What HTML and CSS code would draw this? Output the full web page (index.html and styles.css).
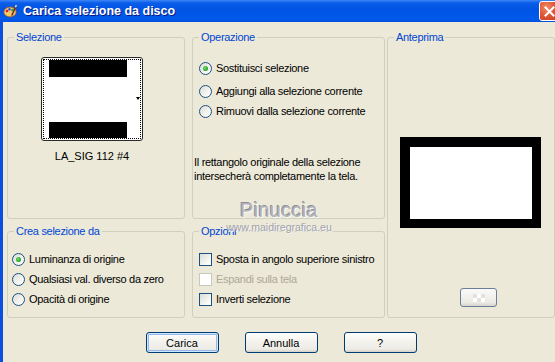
FILE: index.html
```html
<!DOCTYPE html>
<html lang="it">
<head>
    <meta charset="UTF-8">
    <title>Carica selezione da disco</title>
    <link rel="stylesheet" href="styles.css">
</head>
<body>
    <div class="window">
        <div class="titlebar">
            <svg class="app-icon" viewBox="0 0 14 14">
                <ellipse cx="7" cy="8" rx="6.2" ry="5" fill="#f2c27c" stroke="#8a5426" stroke-width="0.8"/>
                <circle cx="4" cy="7" r="1.3" fill="#d82020"/>
                <circle cx="6.5" cy="5.2" r="1.2" fill="#2050e0"/>
                <circle cx="9.5" cy="6" r="1.2" fill="#20a040"/>
                <circle cx="5" cy="10.2" r="1.2" fill="#f0e020"/>
                <path d="M9 11 L13 2" stroke="#6a3a12" stroke-width="1.6" stroke-linecap="round"/>
                <path d="M12.4 3.2 L13.4 1" stroke="#e8e8e8" stroke-width="1.4"/>
            </svg>
            <span class="title">Carica selezione da disco</span>
            <div class="close-btn">
                <svg viewBox="0 0 11 11" width="11" height="11">
                    <path d="M1.5 1.5 L9.5 9.5 M9.5 1.5 L1.5 9.5" stroke="#fff" stroke-width="2" stroke-linecap="square"/>
                </svg>
            </div>
        </div>

        <div class="client">
            <div class="groups">
                <fieldset class="group sel-group">
                    <legend>Selezione</legend>
                    <div class="thumb-wrap">
                        <div class="thumb">
                            <div class="thumb-focus">
                                <div class="thumb-pic">
                                    <div class="bar top-bar"></div>
                                    <div class="bar bottom-bar"></div>
                                </div>
                                <div class="thumb-arrow"></div>
                            </div>
                        </div>
                        <div class="thumb-name">LA_SIG 112 #4</div>
                    </div>
                </fieldset>

                <fieldset class="group op-group">
                    <legend>Operazione</legend>
                    <div class="row first-row"><span class="radio checked"></span>Sostituisci selezione</div>
                    <div class="row second-row"><span class="radio"></span>Aggiungi alla selezione corrente</div>
                    <div class="row"><span class="radio"></span>Rimuovi dalla selezione corrente</div>
                    <p class="note">Il rettangolo originale della selezione<br>intersecherà completamente la tela.</p>
                </fieldset>

                <fieldset class="group preview-group">
                    <legend>Anteprima</legend>
                    <div class="preview-frame"><div class="preview-canvas"></div></div>
                    <div class="small-btn"><span class="checker"></span></div>
                </fieldset>

                <fieldset class="group src-group">
                    <legend>Crea selezione da</legend>
                    <div class="row first-row"><span class="radio checked"></span>Luminanza di origine</div>
                    <div class="row"><span class="radio"></span>Qualsiasi val. diverso da zero</div>
                    <div class="row"><span class="radio"></span>Opacità di origine</div>
                </fieldset>

                <fieldset class="group opt-group">
                    <legend>Opzioni</legend>
                    <div class="row first-row"><span class="check"></span>Sposta in angolo superiore sinistro</div>
                    <div class="row disabled"><span class="check"></span>Espandi sulla tela</div>
                    <div class="row"><span class="check"></span>Inverti selezione</div>
                </fieldset>
            </div>

            <div class="buttons">
                <button class="btn default">Carica</button>
                <button class="btn">Annulla</button>
                <button class="btn">?</button>
            </div>
        </div>

        <div class="watermark">
            <div class="wm-name">Pinuccia</div>
            <div class="wm-site">www.maidiregrafica.eu</div>
        </div>
    </div>
</body>
</html>
```

FILE: styles.css
```css
* {
    box-sizing: border-box;
}
body {
    margin: 0;
    font-family: "Liberation Sans", Arial, sans-serif;
    font-size: 11px;
    color: #000;
    background: #ECE9D8;
}
.window {
    position: relative;
    width: 555px;
    height: 362px;
    overflow: hidden;
    background: #ECE9D8;
}
.titlebar {
    height: 22px;
    display: flex;
    align-items: center;
    padding-left: 3px;
    background: linear-gradient(#3d86f6 0, #0a5ce9 3px, #0054e3 45%, #005aec 85%, #0050dc 100%);
}
.app-icon {
    width: 14px;
    height: 14px;
    margin-right: 6px;
}
.title {
    flex: 1;
    color: #fff;
    font-weight: bold;
    font-size: 12.5px;
    line-height: 22px;
    text-shadow: 1px 1px #0a1883;
}
.close-btn {
    width: 21px;
    height: 20px;
    margin-right: -5px;
    margin-top: 1px;
    align-self: flex-start;
    border: 1px solid #fff;
    border-radius: 3px;
    background: radial-gradient(circle at 35% 30%, #f08a68 0, #e05a36 45%, #c43a1a 100%);
    display: flex;
    align-items: center;
    justify-content: center;
}
.client {
    height: 340px;
    border-left: 3px solid #0a4fe2;
    padding: 9px 0 0 4px;
    letter-spacing: -0.3px;
}
.groups {
    display: grid;
    grid-template-columns: 178px 7px 193px 2px 168px;
    grid-template-rows: 188px 93px;
    row-gap: 6px;
}
.group {
    margin: 0;
    padding: 0;
    min-width: 0;
    border: 1px solid #D0D0BF;
    border-radius: 3px;
}
.group legend {
    margin-left: 6px;
    padding: 0 2px;
    line-height: 13px;
    color: #0046D5;
}
.sel-group { grid-column: 1; grid-row: 1; }
.op-group { grid-column: 3; grid-row: 1; }
.preview-group { grid-column: 5; grid-row: 1 / span 2; }
.src-group { grid-column: 1; grid-row: 2; }
.opt-group { grid-column: 3; grid-row: 2; }

/* selection thumbnail */
.thumb-wrap {
    width: 102px;
    margin: 13px 0 0 33px;
}
.thumb {
    height: 84px;
    border: 1px solid #2a2a2a;
    border-radius: 3px;
    background: #fff;
    padding: 1px;
}
.thumb-focus {
    height: 100%;
    border: 1px dotted #000;
    display: flex;
    padding: 0 0 0 5px;
}
.thumb-pic {
    width: 78px;
    display: flex;
    flex-direction: column;
    justify-content: space-between;
}
.bar {
    background: #000;
    height: 17px;
}
.bottom-bar {
    height: 16px;
}
.thumb-arrow {
    flex: 1;
    position: relative;
}
.thumb-arrow::after {
    content: "";
    position: absolute;
    right: 0;
    top: 37px;
    border-left: 2.5px solid transparent;
    border-right: 2.5px solid transparent;
    border-top: 3px solid #000;
}
.thumb-name {
    margin-top: 9px;
    text-align: center;
    line-height: 13px;
    letter-spacing: 0;
}

/* radios and checkboxes */
.row {
    display: flex;
    align-items: center;
    height: 20px;
    line-height: 13px;
    white-space: nowrap;
}
.op-group .row,
.opt-group .row {
    padding-left: 6px;
}
.src-group .row {
    padding-left: 4px;
}
.op-group .first-row {
    margin-top: 14px;
}
.op-group .second-row {
    margin-top: 3px;
}
.src-group .first-row,
.opt-group .first-row {
    margin-top: 11px;
}
.radio {
    width: 13px;
    height: 13px;
    border-radius: 50%;
    border: 1px solid #1C5180;
    background: linear-gradient(135deg, #DCDCD7 0%, #F4F4F0 60%, #fff 100%);
    margin-right: 4px;
    position: relative;
    flex: none;
}
.radio.checked::after {
    content: "";
    position: absolute;
    left: 3px;
    top: 3px;
    width: 5px;
    height: 5px;
    border-radius: 50%;
    background: radial-gradient(circle at 40% 40%, #6fe06a 0, #2ca82c 60%, #1d8a1d 100%);
}
.check {
    width: 13px;
    height: 13px;
    border: 1px solid #1C5180;
    background: linear-gradient(135deg, #DCDCD7 0%, #F4F4F0 60%, #fff 100%);
    margin-right: 4px;
    flex: none;
}
.disabled {
    color: #ACA899;
}
.disabled .check {
    border-color: #CAC8BB;
    background: #fff;
}
.note {
    margin: 34px 0 0 1px;
    line-height: 14px;
}

/* preview */
.preview-frame {
    width: 141px;
    height: 91px;
    margin: 93px 0 0 12px;
    background: #000;
    padding: 10px 9px 9px 10px;
}
.preview-canvas {
    height: 100%;
    background: #fff;
}
.small-btn {
    width: 37px;
    height: 19px;
    margin: 60px 0 0 72px;
    border: 1px solid #6b7f9a;
    border-radius: 3px;
    background: linear-gradient(#fafaf8, #eceae4 80%, #d8d4cc);
    display: flex;
    align-items: center;
    justify-content: center;
}
.checker {
    width: 12px;
    height: 8px;
    background: repeating-conic-gradient(#ffffff 0 25%, #e2e2de 0 50%) 0 0 / 8px 8px;
}

/* dialog buttons */
.buttons {
    display: flex;
    justify-content: center;
    gap: 26px;
    margin-top: 14px;
}
.btn {
    width: 73px;
    height: 21px;
    padding: 0;
    font-family: "Liberation Sans", Arial, sans-serif;
    font-size: 11px;
    color: #000;
    border: 1px solid #003C74;
    border-radius: 3px;
    background: linear-gradient(#ffffff 0, #f4f3ee 40%, #ecebe6 85%, #d6d0c5 100%);
}
.btn.default {
    box-shadow: inset 0 0 0 1px #cee7ff, inset 0 0 0 2px #98b8ea;
}

/* watermark over the dialog */
.watermark {
    position: absolute;
    left: 222px;
    top: 199px;
    width: 114px;
    text-align: center;
    pointer-events: none;
}
.wm-name {
    font-size: 20px;
    line-height: 22px;
    letter-spacing: 0.3px;
    color: #b2b2ba;
    text-shadow: 1px 1px 0 #fafafa, -1px -1px 0 #8e8e96;
}
.wm-site {
    font-size: 10.5px;
    line-height: 12px;
    color: #a2a2aa;
    text-shadow: 1px 1px 0 #f6f6f6;
}
```
